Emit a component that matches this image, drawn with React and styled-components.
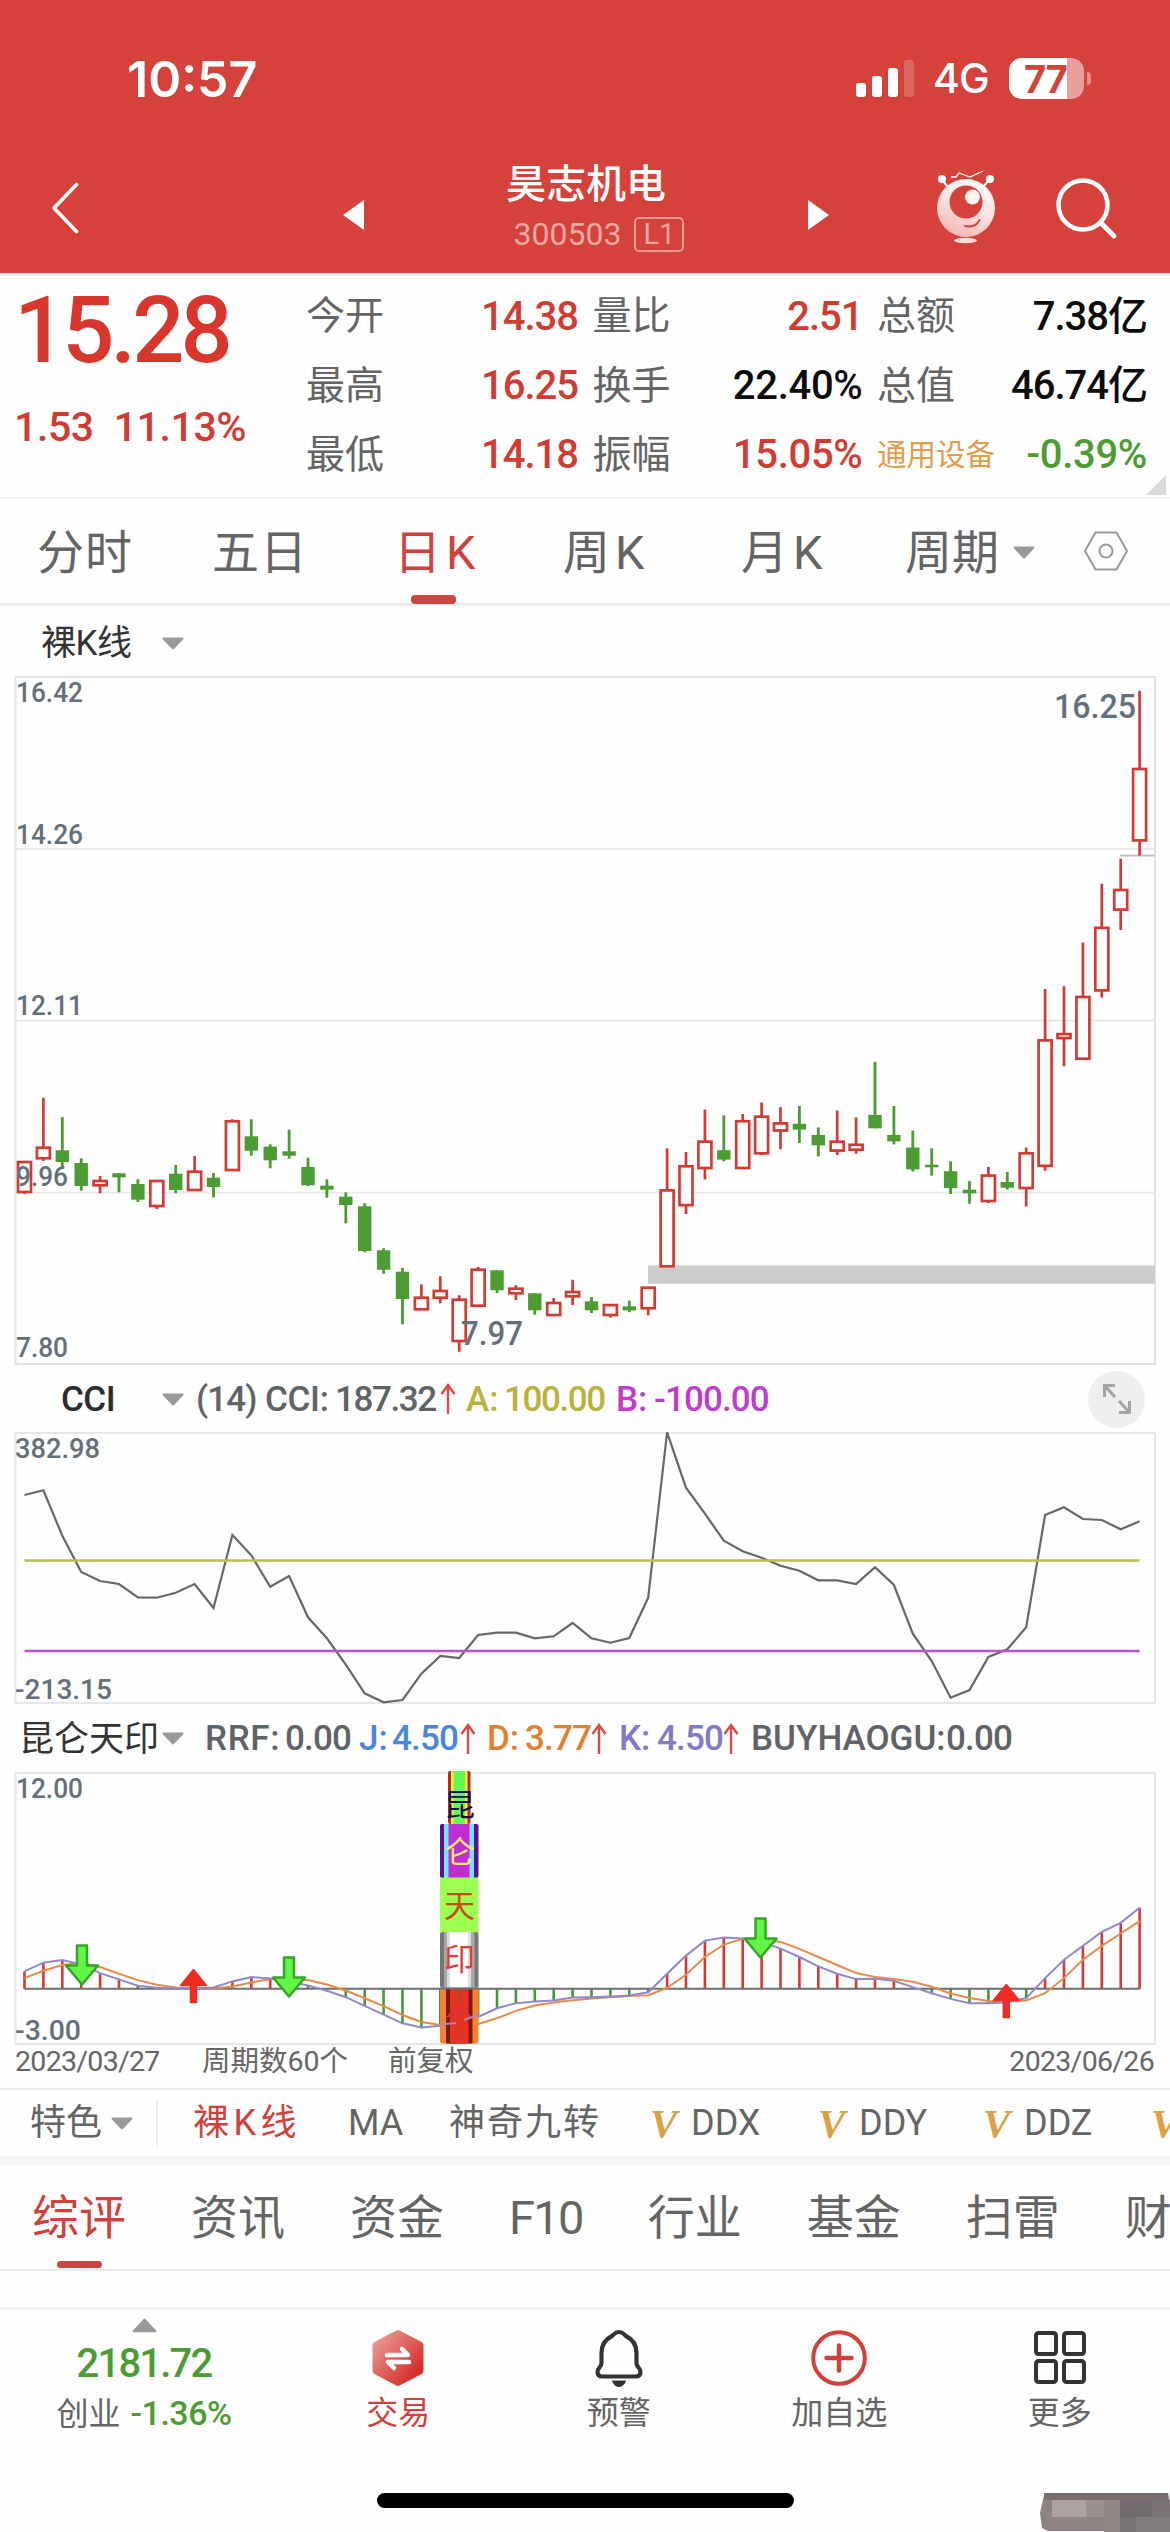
import React from 'react'
import styled, { createGlobalStyle } from 'styled-components'

/* ---------- data ---------- */

// [high, body top, body bottom, low, rising]
const CANDLES = [
    [1162, 1162, 1192, 1194, 1], [1097.7, 1147.7, 1158.3, 1161, 1], [1117, 1150.3, 1162, 1168, 0],
    [1158.3, 1163, 1186, 1190.7, 0], [1176, 1181, 1185.3, 1193.3, 1], [1173.3, 1173.3, 1177.3, 1192.3, 0],
    [1179.3, 1184, 1199.7, 1202, 0], [1180.7, 1181, 1206, 1209, 1], [1165, 1173.7, 1190, 1193.3, 0],
    [1156, 1171.7, 1190, 1190, 1], [1173, 1177.7, 1187, 1197.3, 0], [1119.3, 1121.3, 1170, 1170, 1],
    [1119.3, 1136.3, 1150.7, 1155.7, 0], [1144.3, 1146.7, 1160.3, 1168.3, 0], [1129.7, 1151.3, 1155.7, 1158.7, 0],
    [1157.7, 1167, 1185.3, 1186, 0], [1179.3, 1185.7, 1189.7, 1197.7, 0], [1192.3, 1196.7, 1205, 1223.3, 0],
    [1203.3, 1206.3, 1251, 1252.3, 0], [1248.3, 1250.3, 1269.7, 1273.7, 0], [1268, 1271.7, 1299, 1324.3, 0],
    [1284.3, 1297.7, 1309.3, 1309.3, 1], [1276.3, 1291, 1297.7, 1303.3, 1], [1295.3, 1299.7, 1341, 1351.7, 1],
    [1267, 1269.7, 1305.7, 1305.7, 1], [1270.3, 1270.3, 1290.3, 1293, 0], [1285.3, 1288.7, 1293.3, 1300, 1],
    [1293.3, 1293.3, 1310.3, 1314.7, 0], [1298, 1303, 1315, 1315, 1], [1279.7, 1292, 1296.3, 1305, 1],
    [1297, 1301.3, 1310.3, 1313, 0], [1305.1, 1305.1, 1315, 1317.6, 1], [1300.6, 1306.4, 1310.4, 1312.2, 0],
    [1287.7, 1287.7, 1308.2, 1315.4, 1], [1148.4, 1190.4, 1266.3, 1266.3, 1], [1152, 1166.3, 1205.1, 1214, 1],
    [1109.6, 1141.7, 1168, 1179.6, 1], [1115.4, 1150.2, 1159.6, 1161.3, 0], [1114, 1121.2, 1168, 1168, 1],
    [1102.4, 1116.7, 1153.3, 1155, 1], [1107.3, 1123.4, 1130.5, 1149.3, 1], [1106, 1123.8, 1129.6, 1143, 0],
    [1127.4, 1135, 1145.3, 1156.4, 0], [1110.4, 1141.7, 1150.6, 1155, 1], [1117.6, 1144.8, 1149.7, 1153.8, 1],
    [1061.8, 1114.9, 1128.3, 1128.3, 0], [1106, 1135, 1141.3, 1144.4, 0], [1130.5, 1147.5, 1169.4, 1171.6, 0],
    [1148.4, 1164.7, 1167.3, 1175.6, 0], [1161.3, 1171.2, 1188.1, 1194, 0], [1181, 1189.7, 1193.3, 1203.8, 0],
    [1167.1, 1175.6, 1201, 1202.9, 1], [1172, 1182, 1187.7, 1189.5, 0], [1147.5, 1153.3, 1188, 1206.4, 1],
    [989, 1040.4, 1165.8, 1170.7, 1], [986.3, 1034.1, 1038, 1066.3, 1], [942.6, 997, 1058.7, 1058.7, 1],
    [883.7, 927.9, 990.4, 997.5, 1], [858.7, 890, 909.6, 930, 1], [690.8, 769, 840.4, 855.5, 1],
]

const CCI = [
    375, 361, 497, 606, 633, 642, 682, 683, 668, 642, 714, 495, 556, 650, 618, 742, 805, 884, 970, 997,
    990, 911, 858, 864, 795, 788, 788, 805, 799, 759, 805, 818, 804, 683, 187, 353, 431, 512, 544, 563,
    587, 602, 631, 631, 642, 592, 645, 791, 873, 983, 960, 861, 838, 772, 435, 412, 447, 450, 478, 454,
]

const K_LINE = [
    780, 754, 746, 759, 785, 804, 823, 829, 831, 831, 828, 810, 797, 801, 810, 822, 838, 857, 883, 909,
    935, 947, 942, 940, 916, 890, 875, 870, 867, 858, 857, 855, 852, 842, 787, 733, 688, 679, 682, 692,
    712, 737, 765, 787, 803, 802, 808, 827, 845, 862, 875, 875, 872, 860, 800, 745, 704, 662, 635, 590,
]

const D_LINE = [
    800, 778, 761, 755, 767, 787, 806, 820, 828, 831, 831, 825, 813, 803, 803, 806, 819, 837, 860, 884,
    910, 931, 940, 942, 937, 920, 898, 882, 873, 866, 861, 857, 853, 851, 829, 790, 737, 700, 683, 682,
    692, 713, 737, 761, 785, 797, 803, 811, 826, 846, 859, 868, 870, 867, 845, 800, 745, 704, 667, 630,
]

const ZERO = 832
const RED = '#d13b33'
const GREEN = '#4a9c33'

const xAt = i => 24.5 + i * 18.9
const cciY = v => 1370 + v / 3
const rrfY = v => 1710 + v / 2.984
const toPoints = (list, y) => list.map((v, i) => `${xAt(i).toFixed(1)},${y(v).toFixed(1)}`).join(' ')

/* ---------- small drawings ---------- */

function Robot() {
    return (
        <svg width="62" height="76" viewBox="935 170 62 76">
            <defs>
                <linearGradient id="robot" x1="0.7" y1="0" x2="0.3" y2="1">
                    <stop offset="0" stopColor="#fffafa" />
                    <stop offset="0.5" stopColor="#fbe0df" />
                    <stop offset="1" stopColor="#f4b5b1" />
                </linearGradient>
            </defs>
            <path d="M942 180l6 7M989 180l-6 7" stroke="#fff" strokeWidth="2" />
            <circle cx="942" cy="179" r="4" fill="#fff" />
            <circle cx="990" cy="179" r="4" fill="#fff" />
            <path d="M951 177h5l3-4 11 4 13-6" fill="none" stroke="#fff" strokeWidth="1.3" />
            <circle cx="966" cy="208" r="29" fill="url(#robot)" />
            <circle cx="966" cy="202" r="16.5" fill="#d5423b" />
            <circle cx="972.5" cy="197" r="7.5" fill="#fff3f2" />
            <path d="M965 226c7 1.500 12-1 14.500-6" fill="none" stroke="#d5423b" strokeWidth="1.8" strokeLinecap="round" />
            <ellipse cx="965.5" cy="240.500" rx="11.500" ry="2.800" fill="#fbdcda" />
        </svg>
    )
}

function UpArrow() {
    return (
        <ArrowSvg viewBox="0 0 16 32">
            <path d="M8 31V2M1.500 11L8 2l6.500 9" fill="none" stroke="#dd4a45" strokeWidth="2.4" />
        </ArrowSvg>
    )
}

function Caret({ up, w = 22, h = 13 }) {
    return (
        <svg width={w} height={h} viewBox="0 0 22 13">
            <path d={up ? 'M11 1.500L20.500 11.500h-19z' : 'M11 11.500L20.500 1.500h-19z'} fill="#999" stroke="#999" strokeWidth="2" strokeLinejoin="round" />
        </svg>
    )
}

function Candle({ x, data }) {
    const [high, top, bottom, low, rising] = data
    if (!rising) {
        return (
            <g fill={GREEN}>
                <rect x={x - 1.4} y={high} width="2.800" height={low - high} />
                <rect x={x - 6.700} y={top} width="13.400" height={Math.max(bottom - top, 2.500)} />
            </g>
        )
    }
    return (
        <g stroke={RED} strokeWidth="2.700" fill="#fff">
            <path d={`M${x} ${high}V${top}M${x} ${bottom}V${low}`} />
            <rect x={x - 6.500} y={top} width="13" height={bottom - top} />
        </g>
    )
}

function DownMark({ x, y }) {
    return (
        <path
            d={`M${x - 5} ${y}h10v20h11L${x} ${y + 39}L${x - 16} ${y + 20}h11z`}
            fill="#62f545"
            stroke="#36a527"
            strokeWidth="2.500"
            strokeLinejoin="round"
        />
    )
}

function UpMark({ x, y }) {
    return (
        <path
            d={`M${x - 3} ${y + 34}v-17h-10L${x} ${y + 1}l13 16h-10v17z`}
            fill="#ee2c22"
            stroke="#ee2c22"
            strokeWidth="1.500"
            strokeLinejoin="round"
        />
    )
}

/* ---------- charts ---------- */

function PriceChart() {
    return (
        <Chart $h={690} viewBox="0 675 1170 690">
            <rect x="15.500" y="677" width="1139.500" height="687" fill="none" stroke="#e3e3e5" strokeWidth="2" />
            {[849, 1020.7, 1192.7].map(y => (
                <path key={y} d={`M16 ${y}H1155`} stroke="#e8e8ea" strokeWidth="1.800" />
            ))}
            <rect x="648" y="1265.400" width="507" height="18.300" fill="#ccc" />
            <path d="M1120 855.500H1155" stroke="#bdbdbd" strokeWidth="2" />
            {CANDLES.map((c, i) => <Candle key={i} x={xAt(i)} data={c} />)}
            <ChartText x="16" y="702" textLength="67">16.42</ChartText>
            <ChartText x="16" y="844" textLength="67">14.26</ChartText>
            <ChartText x="16" y="1015" textLength="67">12.11</ChartText>
            <ChartText x="16" y="1186" textLength="52">9.96</ChartText>
            <ChartText x="16" y="1357" textLength="52">7.80</ChartText>
            <ChartText x="461" y="1345" $size={34} textLength="62">7.97</ChartText>
            <ChartText x="1054" y="718" $size={34} textLength="82">16.25</ChartText>
        </Chart>
    )
}

function CciChart() {
    return (
        <Chart $h={274} viewBox="0 1431 1170 274">
            <rect x="15.500" y="1433" width="1139.500" height="270" fill="none" stroke="#e6e6e8" strokeWidth="2" />
            <polyline points={toPoints(CCI, cciY)} fill="none" stroke="#666768" strokeWidth="2.200" />
            <path d="M24.500 1560.500H1139.500" stroke="#c0bd49" strokeWidth="2.400" />
            <path d="M24.500 1651H1139.500" stroke="#bf4fd0" strokeWidth="2.400" />
            <ChartText x="15" y="1458" textLength="85">382.98</ChartText>
            <ChartText x="15" y="1699" textLength="97">-213.15</ChartText>
        </Chart>
    )
}

function Seal() {
    return (
        <g>
            <rect x="448" y="1771" width="22.500" height="53" rx="2" fill="#b5301b" />
            <rect x="451" y="1771" width="16.500" height="53" fill="#f7f03c" />
            <rect x="453.500" y="1771" width="11.500" height="53" fill="#62fb56" />
            <rect x="440" y="1824" width="38.500" height="54" rx="2" fill="#55138a" />
            <rect x="444" y="1824" width="30" height="54" fill="#74e3fb" />
            <rect x="448.500" y="1824" width="21" height="54" fill="#c32cd5" />
            <rect x="440" y="1877.500" width="38.500" height="55" rx="2" fill="#9dff4f" />
            <rect x="440" y="1932" width="38.500" height="55.500" rx="2" fill="#777" />
            <rect x="444" y="1932" width="30.500" height="55.500" fill="#a9a9a9" />
            <rect x="447" y="1932" width="24" height="55.500" fill="#dcdcdc" />
            <rect x="450" y="1932" width="18" height="55.500" fill="#fff" />
            <rect x="440" y="1988" width="38.500" height="55.500" rx="2" fill="#fa8130" />
            <rect x="446" y="1988" width="26.500" height="55.500" fill="#7d1a12" />
            <rect x="450" y="1988" width="18.500" height="55.500" fill="#e73323" />
            <path d="M440 1988.500h38.500" stroke="#6b6f72" strokeWidth="2" />
            <path d="M459 1989v16" stroke="#a5501c" strokeWidth="2.500" />
            <path d="M459 2003l13 14h-26z" fill="#e0332b" />
            <path d="M440 2024.500l16-1.500M464 2020l14-5" stroke="#b586b4" strokeWidth="2" />
            <SealText x="459.500" y="1816" fill="#160a52">昆</SealText>
            <SealText x="459.500" y="1863" fill="#f8ea6a">仑</SealText>
            <SealText x="459.500" y="1917" fill="#c94a18">天</SealText>
            <SealText x="459.500" y="1970" fill="#e23c38">印</SealText>
        </g>
    )
}

function RrfChart() {
    return (
        <Chart $h={276} viewBox="0 1770 1170 276">
            <rect x="15.500" y="1773" width="1139.500" height="271" fill="none" stroke="#e6e6e8" strokeWidth="2" />
            {K_LINE.map((v, i) => (
                <path
                    key={i}
                    d={`M${xAt(i)} ${rrfY(v)}V${rrfY(ZERO)}`}
                    stroke={v < ZERO ? RED : '#429a36'}
                    strokeWidth="2.600"
                />
            ))}
            <path d="M24.500 1988.800H1139.500" stroke="#6b6f72" strokeWidth="2" />
            <polyline points={toPoints(D_LINE, rrfY)} fill="none" stroke="#ea8a4a" strokeWidth="2" />
            <polyline points={toPoints(K_LINE, rrfY)} fill="none" stroke="#9088cf" strokeWidth="2" />
            <DownMark x={82} y={1945.5} />
            <DownMark x={289} y={1957.5} />
            <DownMark x={760.5} y={1918.5} />
            <UpMark x={193.5} y={1968.5} />
            <UpMark x={1006.3} y={1983.5} />
            <Seal />
            <ChartText x="16" y="1798" textLength="67">12.00</ChartText>
            <ChartText x="15" y="2039.500" textLength="66">-3.00</ChartText>
        </Chart>
    )
}

/* ---------- page ---------- */

const QUOTES = [
    [['今开', '14.38', 'red'], ['量比', '2.51', 'red'], ['总额', '7.38亿', 'black']],
    [['最高', '16.25', 'red'], ['换手', '22.40%', 'black'], ['总值', '46.74亿', 'black']],
    [['最低', '14.18', 'red'], ['振幅', '15.05%', 'red'], ['通用设备', '-0.39%', 'green']],
]

const PERIODS = [
    { name: '分时', w: 175 },
    { name: '五日', w: 182 },
    { name: '日K', w: 169, ls: 5 },
    { name: '周K', w: 178, ls: 5 },
    { name: '月K', w: 164, ls: 5 },
]

const SECTIONS = ['综评', '资讯', '资金', 'F10', '行业', '基金', '扫雷', '财']

function App() {
    return (
        <Page>
            <GlobalStyle />

            <Header>
                <StatusBar>
                    <Clock>10:57</Clock>
                    <StatusRight>
                        <svg width="62" height="37" viewBox="0 0 62 37" fill="#fff">
                            <rect x="0" y="23" width="10" height="14" rx="3" />
                            <rect x="16" y="16" width="10" height="21" rx="3" />
                            <rect x="32" y="8" width="10" height="29" rx="3" />
                            <rect x="48" y="0" width="10" height="37" rx="3" opacity="0.2" />
                        </svg>
                        <Network>4G</Network>
                        <Battery><span>77</span></Battery>
                        <BatteryTip />
                    </StatusRight>
                </StatusBar>
                <TitleBar>
                    <svg width="28" height="52" viewBox="0 0 28 52">
                        <path d="M25.500 2.500L3 26l22.500 23.500" fill="none" stroke="#fff" strokeWidth="3.600" strokeLinecap="round" strokeLinejoin="round" />
                    </svg>
                    <PrevStock width="22" height="32" viewBox="0 0 22 32"><path d="M21 1v30L0 16z" fill="#fff" /></PrevStock>
                    <Stock>
                        <StockName>昊志机电</StockName>
                        <StockCode>300503<Level>L1</Level></StockCode>
                    </Stock>
                    <svg width="22" height="32" viewBox="0 0 22 32"><path d="M1 1v30L22 16z" fill="#fff" /></svg>
                    <HeaderIcons>
                        <Robot />
                        <svg width="64" height="64" viewBox="1054 175 64 64">
                            <circle cx="1083" cy="204" r="24.500" fill="none" stroke="#fff" strokeWidth="4.500" />
                            <path d="M1101 222l13 13" stroke="#fff" strokeWidth="4.800" strokeLinecap="round" />
                        </svg>
                    </HeaderIcons>
                </TitleBar>
            </Header>

            <Quote>
                <LastPrice>
                    <BigPrice>15.28</BigPrice>
                    <Change><span>1.53</span><span>11.13%</span></Change>
                </LastPrice>
                <QuoteGrid>
                    {QUOTES.map((row, i) => (
                        <QuoteRow key={i}>
                            {row.map(([label, value, tone]) => (
                                <QuoteCell key={label}>
                                    <QuoteLabel $sector={label.length > 2}>{label}</QuoteLabel>
                                    <QuoteValue $tone={tone} $percent={value.endsWith('%')}>{value}</QuoteValue>
                                </QuoteCell>
                            ))}
                        </QuoteRow>
                    ))}
                </QuoteGrid>
                <Corner />
            </Quote>

            <PeriodTabs>
                {PERIODS.map(({ name, w, ls }) => (
                    <PeriodTab key={name} $w={w} $ls={ls} $active={name === '日K'}>{name}</PeriodTab>
                ))}
                <PeriodMore>周期<Caret /></PeriodMore>
                <svg width="46" height="42" viewBox="0 0 46 42" fill="none" stroke="#999" strokeWidth="2">
                    <path d="M12.500 2.500h21L44 21 33.500 39.500h-21L2 21z" strokeLinejoin="round" />
                    <circle cx="23" cy="21" r="6.500" />
                </svg>
            </PeriodTabs>

            <MainIndicator>
                <Token $w={121} $ls={-0.5}>裸K线</Token>
                <Caret />
            </MainIndicator>

            <PriceChart />

            <IndicatorBar>
                <Token $w={101} $color="#2b2b2b" $bold $ls={-0.5}>CCI</Token>
                <Token $w={34}><Caret /></Token>
                <Token $w={69} $bold $ls={-0.9}>(14)</Token>
                <Token $w={70} $bold $ls={-0.3}>CCI:</Token>
                <Token $w={105} $bold $ls={-1.4}>187.32</Token>
                <Token $w={26}><UpArrow /></Token>
                <Token $w={38} $bold $color="#b9b23c">A:</Token>
                <Token $w={112} $bold $color="#b9b23c" $ls={-1.4}>100.00</Token>
                <Token $w={38} $bold $color="#c03dcb">B:</Token>
                <Token $w={434} $bold $color="#c03dcb" $ls={-0.9}>-100.00</Token>
                <Expand>
                    <svg width="32" height="34" viewBox="0 0 32 34" fill="none" stroke="#a3a3a3" strokeWidth="3">
                        <path d="M3.500 15V3.500H14M4 4l10 11M28.500 19v11.500H18M28 30L18 19" />
                    </svg>
                </Expand>
            </IndicatorBar>

            <CciChart />

            <IndicatorBar $pad={19}>
                <Token $w={143} $color="#333" $drop={1}>昆仑天印</Token>
                <Token $w={43}><Caret /></Token>
                <Token $w={80} $bold $ls={0.6}>RRF:</Token>
                <Token $w={74} $bold $ls={-0.8}>0.00</Token>
                <Token $w={33} $bold $color="#4a86e0">J:</Token>
                <Token $w={68} $bold $color="#4a86e0" $ls={-0.8}>4.50</Token>
                <Token $w={27}><UpArrow /></Token>
                <Token $w={38} $bold $color="#e2802f">D:</Token>
                <Token $w={66} $bold $color="#e2802f" $ls={-0.8}>3.77</Token>
                <Token $w={28}><UpArrow /></Token>
                <Token $w={38} $bold $color="#8479c4">K:</Token>
                <Token $w={66} $bold $color="#8479c4" $ls={-0.8}>4.50</Token>
                <Token $w={28}><UpArrow /></Token>
                <Token $w={195} $bold>BUYHAOGU:</Token>
                <Token $w={74} $bold $ls={-0.8}>0.00</Token>
            </IndicatorBar>

            <RrfChart />

            <DateAxis>
                <AxisText $w={187} $ls={-0.7}>2023/03/27</AxisText>
                <AxisText $w={186}>周期数60个</AxisText>
                <AxisText>前复权</AxisText>
                <AxisEnd $ls={-0.7}>2023/06/26</AxisEnd>
            </DateAxis>

            <TagBar>
                <TagMenu>特色<Caret /></TagMenu>
                <Tag $w={155} $active $ls={4.5}>裸K线</Tag>
                <Tag $w={101}>MA</Tag>
                <Tag $w={201} $ls={2}>神奇九转</Tag>
                <Tag $w={168}><VipMark>V</VipMark>DDX</Tag>
                <Tag $w={165}><VipMark>V</VipMark>DDY</Tag>
                <Tag $w={168}><VipMark>V</VipMark>DDZ</Tag>
                <Tag><VipMark>V</VipMark></Tag>
            </TagBar>

            <SectionTabs>
                {SECTIONS.map(name => (
                    <SectionTab key={name} $active={name === '综评'} $latin={name === 'F10'}>{name}</SectionTab>
                ))}
            </SectionTabs>

            <Spacer />

            <BottomNav>
                <IndexCell>
                    <Caret up w={25} h={15} />
                    <IndexValue>2181.72</IndexValue>
                    <IndexChange>创业<b>-1.36%</b></IndexChange>
                </IndexCell>
                <NavItem $active>
                    <svg width="52" height="58" viewBox="0 0 52 58">
                        <defs>
                            <linearGradient id="trade" x1="0" y1="0.1" x2="0.8" y2="0.9">
                                <stop offset="0" stopColor="#e79a93" />
                                <stop offset="1" stopColor="#d6302d" />
                            </linearGradient>
                        </defs>
                        <path d="M26 4.500L48 16v26L26 53.500 4 42V16z" fill="url(#trade)" stroke="url(#trade)" strokeWidth="7" strokeLinejoin="round" />
                        <path d="M15 26h21l-6-6M37 33H16l6 6" fill="none" stroke="#fff" strokeWidth="4.500" strokeLinecap="round" strokeLinejoin="round" />
                    </svg>
                    交易
                </NavItem>
                <NavItem>
                    <svg width="52" height="58" viewBox="0 0 52 58">
                        <path d="M26 3c-4 0-5 2.500-7 4C11 11 8.500 17 8.500 24v10c0 4-4 5-4 9 0 3 2 4.500 5 4.500h33c3 0 5-1.500 5-4.500 0-4-4-5-4-9V24c0-7-2.500-13-10.500-17-2-1.500-3-4-7-4z" fill="none" stroke="#333" strokeWidth="4.200" strokeLinejoin="round" />
                        <path d="M19 51.500h14c-1 4-4 6.500-7 6.500s-6-2.500-7-6.500z" fill="#333" />
                    </svg>
                    预警
                </NavItem>
                <NavItem>
                    <svg width="58" height="58" viewBox="0 0 58 58" fill="none" stroke="#d0413c">
                        <circle cx="29" cy="29" r="25.800" strokeWidth="4" />
                        <path d="M29 16.500v25M16.500 29h25" strokeWidth="4.500" strokeLinecap="round" />
                    </svg>
                    加自选
                </NavItem>
                <NavItem>
                    <svg width="56" height="58" viewBox="0 0 56 58" fill="none" stroke="#333" strokeWidth="4">
                        <rect x="4" y="4" width="20" height="21" rx="2.500" />
                        <rect x="32" y="4" width="20" height="21" rx="2.500" />
                        <rect x="4" y="32" width="20" height="21" rx="2.500" />
                        <rect x="32" y="32" width="20" height="21" rx="2.500" />
                    </svg>
                    更多
                </NavItem>
            </BottomNav>

            <HomeArea>
                <HomeBar />
                <Mosaic width="130" height="39" viewBox="0 0 130 39">
                    <path d="M4 2h8l5 2 5-4h20l6 3 8-2 10-1h30l4 3 8-2 12-1h8l2 8v30H8L2 35 0 20z" fill="#8f8282" />
                    <path d="M4 0h124v7H4z" fill="#7b6c6e" />
                    <rect x="12" y="7" width="34" height="17" fill="#ada2a1" />
                    <rect x="46" y="7" width="18" height="17" fill="#9c8f8f" />
                    <rect x="64" y="7" width="16" height="32" fill="#938687" />
                    <rect x="80" y="7" width="32" height="17" fill="#6f6a6e" />
                    <rect x="80" y="24" width="16" height="15" fill="#777376" />
                    <rect x="96" y="24" width="34" height="15" fill="#817c7f" />
                    <rect x="112" y="7" width="18" height="17" fill="#7a7174" />
                </Mosaic>
            </HomeArea>
        </Page>
    )
}

export default App

const GlobalStyle = createGlobalStyle`
    * { box-sizing: border-box; }
    body { margin: 0; background: #fff; }
`

const Page = styled.div`
    width: 1170px;
    height: 2532px;
    overflow: hidden;
    display: flex;
    flex-direction: column;
    background: #fefefe;
    color: #646464;
    font-family: Roboto, "Noto Sans CJK SC", sans-serif;
    line-height: 1;
    white-space: nowrap;
    > * { flex-shrink: 0; }
    svg { display: block; flex-shrink: 0; }
`

const Header = styled.header`
    height: 273px;
    background: #d5423b;
    color: #fff;
`

const StatusBar = styled.div`
    height: 157px;
    padding: 0 79px 0 127px;
    display: flex;
    justify-content: space-between;
    align-items: center;
    font-family: Inter, sans-serif;
`

const Clock = styled.div`
    font-size: 50px;
    font-weight: 600;
`

const StatusRight = styled.div`
    display: flex;
    align-items: center;
`

const Network = styled.div`
    margin-left: 15px;
    width: 76px;
    font-size: 41px;
    font-weight: 500;
    letter-spacing: -1px;
`

const Battery = styled.div`
    width: 75px;
    height: 41px;
    border-radius: 13px;
    background: linear-gradient(to right, #fff 58px, #eb9f9c 58px);
    color: #d5423b;
    font-size: 38px;
    font-weight: 700;
    letter-spacing: -1px;
    display: flex;
    align-items: center;
    padding-left: 15px;
`

const BatteryTip = styled.div`
    margin-left: 3px;
    width: 4px;
    height: 13px;
    border-radius: 0 4px 4px 0;
    background: #e58e8a;
`

const TitleBar = styled.div`
    height: 116px;
    padding: 0 52px 14px 51px;
    display: flex;
    align-items: center;
`

const PrevStock = styled.svg`
    margin: 14px 0 0 264px;
    & ~ svg { margin-top: 14px; }
`

const Stock = styled.div`
    width: 442px;
    display: flex;
    flex-direction: column;
    align-items: center;
`

const StockName = styled.div`
    font-size: 40px;
    font-weight: 500;
    margin-bottom: 12px;
`

const StockCode = styled.div`
    display: flex;
    align-items: center;
    margin-left: 26px;
    font-size: 32px;
    color: #f0a8a4;
`

const Level = styled.span`
    margin-left: 13px;
    width: 50px;
    height: 35px;
    border: 2px solid #eb9a96;
    border-radius: 5px;
    font-size: 29px;
    display: flex;
    align-items: center;
    justify-content: center;
`

const HeaderIcons = styled.div`
    margin-left: auto;
    display: flex;
    align-items: center;
    gap: 57px;
`

const Quote = styled.section`
    position: relative;
    height: 226px;
    display: flex;
    border-bottom: 2px solid #efefef;
`

const LastPrice = styled.div`
    width: 306px;
    padding: 12px 0 0 14px;
    color: #d8372e;
`

const BigPrice = styled.div`
    font-size: 92px;
    font-weight: 500;
    letter-spacing: -4px;
`

const Change = styled.div`
    margin-top: 30px;
    display: flex;
    gap: 20px;
    font-size: 41px;
    font-weight: 500;
    letter-spacing: -0.4px;
    color: #d13b33;
`

const QuoteGrid = styled.div`
    padding-top: 9px;
`

const QuoteRow = styled.div`
    height: 69.4px;
    display: grid;
    grid-template-columns: 272px 270px 270px;
    column-gap: 14.5px;
    align-items: center;
`

const QuoteCell = styled.div`
    display: flex;
    align-items: center;
    justify-content: space-between;
`

const QuoteLabel = styled.span`
    font-size: ${p => (p.$sector ? 29.5 : 39)}px;
    color: ${p => (p.$sector ? '#e39c48' : '#646464')};
`

const TONES = { red: '#d13b33', black: '#0c0c0c', green: '#4a9c33' }

const QuoteValue = styled.span`
    font-size: 40px;
    font-weight: 500;
    letter-spacing: ${p => (p.$percent ? -0.3 : -1)}px;
    color: ${p => TONES[p.$tone]};
`

const Corner = styled.div`
    position: absolute;
    right: 4px;
    bottom: 2px;
    border-left: 20px solid transparent;
    border-bottom: 20px solid #d9d9d9;
`

const PeriodTabs = styled.nav`
    height: 107px;
    padding-left: 37px;
    display: flex;
    align-items: center;
    border-bottom: 3px solid #ececec;
    font-size: 47px;
`

const PeriodTab = styled.div`
    position: relative;
    width: ${p => p.$w}px;
    height: 100%;
    padding-top: 3px;
    display: flex;
    align-items: center;
    letter-spacing: ${p => p.$ls || 1}px;
    color: ${p => (p.$active ? '#d0413c' : 'inherit')};
    &::after {
        content: '';
        display: ${p => (p.$active ? 'block' : 'none')};
        position: absolute;
        left: 17px;
        bottom: -1px;
        width: 45px;
        height: 9px;
        border-radius: 4px;
        background: #cc4640;
    }
`

const PeriodMore = styled.div`
    width: 178px;
    padding-top: 3px;
    display: flex;
    align-items: center;
    gap: 14px;
`

const MainIndicator = styled.div`
    height: 69px;
    padding: 6px 0 0 41px;
    display: flex;
    align-items: center;
    color: #333;
`

const Token = styled.span`
    width: ${p => p.$w}px;
    flex-shrink: 0;
    padding-top: ${p => p.$drop || 0}px;
    font-size: 35px;
    font-weight: ${p => (p.$bold ? 500 : 400)};
    letter-spacing: ${p => p.$ls || 0}px;
    color: ${p => p.$color || 'inherit'};
`

const ArrowSvg = styled.svg`
    width: 16px;
    height: 32px;
`

const IndicatorBar = styled.div`
    height: ${p => (p.$pad ? 65 : 66)}px;
    padding-left: ${p => p.$pad || 61}px;
    padding-top: 2px;
    display: flex;
    align-items: center;
    color: #5f6368;
`

const Expand = styled.div`
    width: 57px;
    height: 57px;
    border-radius: 50%;
    background: #eee;
    display: flex;
    align-items: center;
    justify-content: center;
`

const Chart = styled.svg`
    width: 1170px;
    height: ${p => p.$h}px;
`

const ChartText = styled.text.attrs({ lengthAdjust: 'spacingAndGlyphs' })`
    font-size: ${p => p.$size || 28}px;
    font-weight: 500;
    fill: #63707b;
`

const SealText = styled.text`
    font-size: 31px;
    text-anchor: middle;
`

const DateAxis = styled.div`
    height: 44px;
    padding: 0 16px 9px 15px;
    display: flex;
    align-items: center;
    border-bottom: 2px solid #e9e9e9;
`

const AxisText = styled.span`
    width: ${p => (p.$w ? p.$w + 'px' : 'auto')};
    font-size: 28.5px;
    letter-spacing: ${p => p.$ls || 0}px;
    color: #666;
`

const AxisEnd = styled(AxisText)`
    margin-left: auto;
`

const TagBar = styled.div`
    height: 75px;
    padding-left: 30px;
    display: flex;
    align-items: center;
    overflow: hidden;
    border-bottom: 9px solid #f4f4f4;
    font-size: 36px;
`

const TagMenu = styled.div`
    width: 128px;
    height: 46px;
    margin-right: 35px;
    flex-shrink: 0;
    display: flex;
    align-items: center;
    gap: 9px;
    border-right: 2px solid #ececec;
`

const Tag = styled.div`
    width: ${p => (p.$w ? p.$w + 'px' : 'auto')};
    flex-shrink: 0;
    display: flex;
    align-items: center;
    letter-spacing: ${p => p.$ls || 0}px;
    color: ${p => (p.$active ? '#d0413c' : 'inherit')};
`

const VipMark = styled.span`
    width: 41px;
    font-family: "Liberation Serif", serif;
    font-size: 41px;
    font-weight: 700;
    font-style: italic;
    color: #dca045;
`

const SectionTabs = styled.nav`
    height: 106px;
    padding-left: 32px;
    display: flex;
    gap: 65px;
    overflow: hidden;
    border-bottom: 2px solid #ececec;
    font-size: 47px;
`

const SectionTab = styled.div`
    position: relative;
    flex-shrink: 0;
    display: flex;
    align-items: center;
    letter-spacing: ${p => (p.$latin ? -1.7 : 0)}px;
    color: ${p => (p.$active ? '#d0413c' : 'inherit')};
    &::after {
        content: '';
        display: ${p => (p.$active ? 'block' : 'none')};
        position: absolute;
        left: 25px;
        bottom: 1px;
        width: 45px;
        height: 7px;
        border-radius: 4px;
        background: #cc4640;
    }
`

const Spacer = styled.div`
    height: 36px;
`

const BottomNav = styled.nav`
    height: 160px;
    display: grid;
    grid-template-columns: 288px repeat(4, 220.5px);
    border-top: 3px solid #f3f3f3;
    font-size: 32px;
`

const IndexCell = styled.div`
    padding-top: 8px;
    display: flex;
    flex-direction: column;
    align-items: center;
    color: #4a9c33;
`

const IndexValue = styled.div`
    margin-top: 11px;
    font-size: 40px;
    font-weight: 500;
    letter-spacing: -1.8px;
`

const IndexChange = styled.div`
    margin-top: 12px;
    color: #646464;
    b {
        margin-left: 10px;
        font-size: 34px;
        font-weight: 500;
        letter-spacing: -0.5px;
        color: #4a9c33;
    }
`

const NavItem = styled.div`
    padding-top: 19px;
    display: flex;
    flex-direction: column;
    align-items: center;
    gap: 10px;
    color: ${p => (p.$active ? '#d0413c' : 'inherit')};
`

const HomeArea = styled.div`
    position: relative;
    flex: 1;
    padding-top: 26px;
`

const HomeBar = styled.div`
    width: 417px;
    height: 15px;
    margin-left: 377px;
    border-radius: 8px;
    background: #000;
`

const Mosaic = styled.svg`
    position: absolute;
    right: 0;
    bottom: 0;
`
